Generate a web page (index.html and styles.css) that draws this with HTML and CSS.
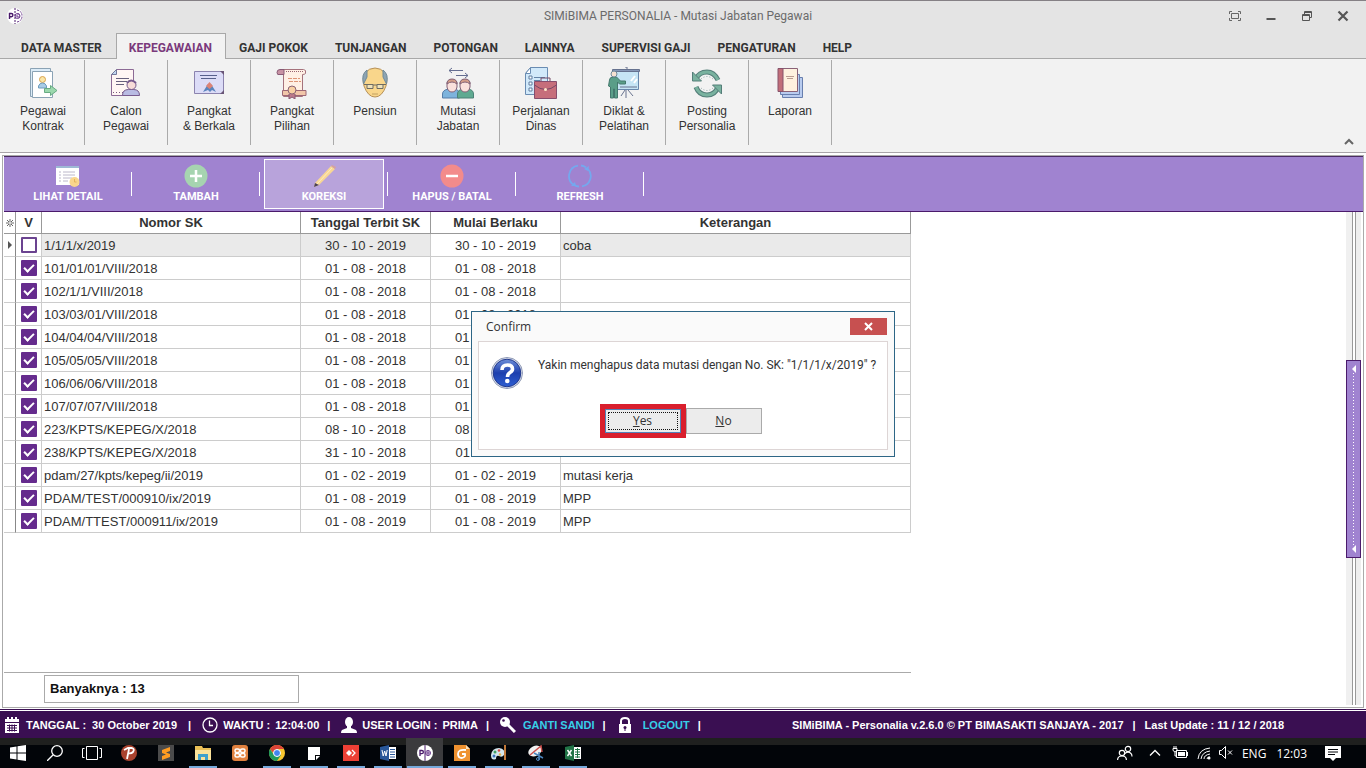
FILE: index.html
```html
<!DOCTYPE html>
<html lang="id">
<head>
<meta charset="utf-8">
<title>SIMiBIMA PERSONALIA - Mutasi Jabatan Pegawai</title>
<link rel="stylesheet" href="styles.css">
</head>
<body>
<header class="titlebar">
  <svg class="app-logo" width="16" height="16" viewBox="0 0 16 16"><circle cx="8" cy="8" r="8" fill="#fff"/><path d="M8 0v16" stroke="#4a1a6b" stroke-dasharray="2 1"/><path d="M2.500 11V5.500h1.800a1.500 1.500 0 0 1 0 3.200H2.500" fill="none" stroke="#4a1a6b" stroke-width="1.400"/><circle cx="10.500" cy="8" r="2.500" fill="none" stroke="#6b3a8c"/><path d="M9 8h4M11 5v6M10 2q5 1 5 6t-5 6" fill="none" stroke="#6b3a8c" stroke-dasharray="2 1"/></svg>
  <h1 class="title">SIMiBIMA PERSONALIA - Mutasi Jabatan Pegawai</h1>
  <div class="window-buttons">
    <button type="button" aria-label="Layar penuh"><svg width="12" height="10" viewBox="0 0 12 10"><path d="M.5 3V.5H3M9 .5h2.500V3M11.500 7v2.500H9M3 9.500H.5V7M2.500 2.500h7v5h-7z" fill="none" stroke="#666"/></svg></button>
    <button type="button" aria-label="Kecilkan"><svg width="12" height="12" viewBox="0 0 12 12"><path d="M1.500 9h9" stroke="#555" stroke-width="2"/></svg></button>
    <button type="button" aria-label="Pulihkan"><svg width="12" height="12" viewBox="0 0 12 12"><path d="M3.500 4V1.500h7v6H8.500M1.500 4.500h7v6h-7zM1.500 5.500h7M3.500 2.500h7" fill="none" stroke="#555"/></svg></button>
    <button type="button" aria-label="Tutup"><svg width="12" height="12" viewBox="0 0 12 12"><path d="M1.500 1.500l9 9M10.500 1.500l-9 9" stroke="#555" stroke-width="2.200"/></svg></button>
  </div>
</header>
<nav class="tabs">
  <button type="button">DATA MASTER</button><button type="button" class="current">KEPEGAWAIAN</button><button type="button">GAJI POKOK</button><button type="button">TUNJANGAN</button><button type="button">POTONGAN</button><button type="button">LAINNYA</button><button type="button">SUPERVISI GAJI</button><button type="button">PENGATURAN</button><button type="button">HELP</button>
</nav>
<section class="ribbon">
  <button type="button" class="ribbon-item"><svg viewBox="0 0 32 32"><g fill="#fff" stroke="#8ba3b5"><path fill="#dcecf8" d="M3.500 1.500h20v28h-20z"/><path d="M5.500 4.500h20v26h-20z"/></g><circle cx="15.500" cy="12.500" r="3" fill="#fbe6a8" stroke="#d8a24e"/><path d="M11.500 21v-2q1-3 4-3t4 3v2z" fill="#a9cce6" stroke="#6d9cbd"/><path d="M17.500 21.500h6v-3l6.500 5-6.500 5v-3h-6z" fill="#9bd8ad" stroke="#68ab83"/></svg><span>Pegawai<br>Kontrak</span></button>
  <button type="button" class="ribbon-item"><svg viewBox="0 0 32 32"><path d="M6.500 2.500h17v26h-22v-21z" fill="#fff6f4" stroke="#8c6a95"/><path d="M6.500 2.500v5h-5z" fill="#bfd5ee" stroke="#75799b"/><path d="M6 11.500h13M6 14.500h11M6 17.500h8" stroke="#67607d"/><path d="M3 25.500h10" stroke="#77577f" stroke-dasharray="1 2"/><path d="M12.500 28.500q0-6 6-6h5q6 0 6 6z" fill="#b9bbe3" stroke="#775b8e"/><circle cx="21.500" cy="18" r="4.500" fill="#f7dcd8" stroke="#775b8e"/><path d="M17 16q4-5 9 0" fill="none" stroke="#775b8e" stroke-width="2"/></svg><span>Calon<br>Pegawai</span></button>
  <button type="button" class="ribbon-item"><svg viewBox="0 0 32 32"><path d="M1.500 4.500h29v22h-29z" fill="#dcdcf7" stroke="#8b83ae"/><path d="M27 4h4v4zM27 27h4v-4z" fill="#695577"/><path d="M7 8.500h17M8 11.500h15" stroke="#57608b"/><path d="M10 25l5-8h3l5 8-4-2-2 2-2-2z" fill="#5a84bd"/><path d="M13 19l3.500-4 3.500 4-3.500 3z" fill="#dc8276"/></svg><span>Pangkat<br>&amp; Berkala</span></button>
  <button type="button" class="ribbon-item"><svg viewBox="0 0 32 32"><path d="M7.500 2.500h20q3 0 2 4-1 1-3 1v22h-19z" fill="#fff0e5" stroke="#a5727c"/><path d="M4 2.500q-3 0-3 3t3 2h4v-5z" fill="#c892a3" stroke="#885b76"/><path d="M10 4.500h17" stroke="#9a6472" stroke-dasharray="1 1"/><path d="M12 11.500h12M13 14.500h12" stroke="#dc9476" stroke-dasharray="4 1"/><path d="M6.500 23.500H30v5H6.500z" fill="#f1c6a9" stroke="#9c6775"/><path d="M13 27v5l3-2 3 2v-5" fill="#bd7a8a" stroke="#885b76"/><circle cx="16" cy="23" r="4" fill="#f9d0a4" stroke="#8a6375"/></svg><span>Pangkat<br>Pilihan</span></button>
  <button type="button" class="ribbon-item"><svg viewBox="0 0 32 32"><path d="M5 19q-2-8 1-13 4-5 10-5t10 5q3 5 1 13-4 11-11 11T5 19z" fill="#f9d68b" stroke="#b69058"/><path d="M8 3Q2 7 4.500 17L8 10zM24 3q6 4 3.500 14L24 10z" fill="#8da4b3" stroke="#718b99"/><path d="M8 17.500h6v4H8zM18 17.500h6v4h-6zM14 18h4M5 17.500h3M24 17.500h3" fill="#eee2ba" stroke="#6d6b62"/><path d="M13 27h6" stroke="#c1a062"/></svg><span>Pensiun</span></button>
  <button type="button" class="ribbon-item"><svg viewBox="0 0 32 32"><path d="M7 3.500h14M10 1L7 3.500 10 6M14 8.500h12M23 6l3 2.500-3 2.500" fill="none" stroke="#656e91"/><path d="M.5 31v-4q0-4 6-5h6q5 1 5 5v4z" fill="#7db3dc" stroke="#567da8"/><path d="M15.500 31v-4q0-4 5-5h6q5 1 5 5v4z" fill="#5faa91" stroke="#4c8177"/><path d="M5 16q0-3 5-3t5 3v4q-1 5-5 5t-5-5zM18 16q0-3 5-3t5 3v4q-1 5-5 5t-5-5z" fill="#fae1dc" stroke="#826277"/><path d="M5 17q0-5 5-5t5 5q-5-4-10 0zM18 17q0-5 5-5t5 5q-5-4-10 0z" fill="#d29c87" stroke="#826277"/></svg><span>Mutasi<br>Jabatan</span></button>
  <button type="button" class="ribbon-item"><svg viewBox="0 0 32 32"><path d="M5.500.5h17v27h-22v-21z" fill="#d1e9fa" stroke="#6a8cb2"/><path d="M5.500.5v6h-5z" fill="#fff" stroke="#6a8cb2"/><path d="M4 9h3v3H4zM4 15h3v3H4zM4 21h3v3H4z" fill="#fff" stroke="#5f7ca0"/><path d="M9 10.500h11M9 13.500h6" stroke="#6384a8"/><path d="M9.500 14.500h22v17h-22z" fill="#c66e7b" stroke="#874d6d"/><path d="M16 14v-3h9v3M9.500 18q11 9 22 0" fill="none" stroke="#754a67"/><circle cx="20.500" cy="22.500" r="1.500" fill="#ffe9ca"/></svg><span>Perjalanan<br>Dinas</span></button>
  <button type="button" class="ribbon-item"><svg viewBox="0 0 32 32"><path d="M5.500 4.500h25v18h-25z" fill="#c6e5f5" stroke="#6887ac"/><path d="M4.500 2.500h27v2h-27z" fill="#8798b7" stroke="#66728f"/><path d="M17 0h2v2M18 23v8M17 23l-4 6M20 23l5 6M12 20h17" fill="none" stroke="#68738f"/><path d="M23 14l4-5M26 16l3-4" stroke="#fff" stroke-width="2"/><path d="M1.500 13q0-3 4-3h3l4 4h5v3h-6l-2-2v16h-3v-9h-1v9h-3V20l-2-1z" fill="#5a9e88" stroke="#44786d"/><circle cx="6" cy="7" r="3" fill="#f7e1d1" stroke="#708a9a"/></svg><span>Diklat &amp;<br>Pelatihan</span></button>
  <button type="button" class="ribbon-item"><svg viewBox="0 0 32 32"><path d="M5 12Q8 5 16 5q7 0 11 8M27 20q-3 8-11 8-8 0-11-8" fill="none" stroke="#547e79" stroke-width="5"/><path d="M5 12Q8 5 16 5q7 0 11 8M27 20q-3 8-11 8-8 0-11-8" fill="none" stroke="#79b29f" stroke-width="3"/><path d="M1.500 5v9h9zM30.500 27v-9h-9z" fill="#79b29f" stroke="#547e79"/><path d="M10 12q6-5 12 0M10 21q6 5 12 0" fill="none" stroke="#8da6a8" stroke-dasharray="1 2"/></svg><span>Posting<br>Personalia</span></button>
  <button type="button" class="ribbon-item"><svg viewBox="0 0 32 32"><g fill="#b9ccef" stroke="#687fae"><path d="M8.500 10.500h20v20h-20z"/><path d="M6.500 7.500h19v20h-19z"/></g><path d="M4.500 1.500h19v23h-19z" fill="#fff1df" stroke="#8a6277"/><path d="M4 1.500h5v23H4z" fill="#c26e79" stroke="#87536b"/><path d="M12 9.500h8M13 11.500h6" stroke="#ba9b91"/></svg><span>Laporan</span></button>
  <button type="button" class="collapse" aria-label="Ciutkan pita"><svg width="10" height="7" viewBox="0 0 10 7"><path d="M1 6l4-4 4 4" fill="none" stroke="#666" stroke-width="2"/></svg></button>
</section>
<main class="workspace">
  <div class="toolbar">
    <div class="tool"><button type="button"><svg viewBox="0 0 24 24"><path d="M0 2h23v19H0z" fill="#fff"/><path d="M0 2h23v2H0z" fill="#9eb9d5"/><path d="M3 8h2M7 8h12M3 11h2M7 11h12M3 14h2M7 14h9M3 17h2M7 17h5" stroke="#bcb8ca"/><circle cx="18.500" cy="18" r="5" fill="#f9d68c"/><path d="M18.500 15v3h2" fill="none" stroke="#e3b45d"/></svg>LIHAT DETAIL</button></div>
    <div class="tool"><button type="button"><svg viewBox="0 0 24 24"><circle cx="12" cy="12" r="11.500" fill="#a6d4b0"/><path d="M12 6v12M6 12h12" stroke="#fff" stroke-width="2.500"/></svg>TAMBAH</button></div>
    <div class="tool"><button type="button" class="selected"><svg viewBox="0 0 24 24"><path d="M3 19L19 2l4 3L7 21l-5 2z" fill="#f8d794"/><path d="M3 19l4 2-5 2z" fill="#4b4057"/><path d="M19 2l1-1 4 2-1 2z" fill="#d6a29d"/><path d="M5 20L20 4" stroke="#ffecc0"/></svg>KOREKSI</button></div>
    <div class="tool"><button type="button"><svg viewBox="0 0 24 24"><circle cx="12" cy="12" r="11.500" fill="#f38b8b"/><path d="M6 12h12" stroke="#fff" stroke-width="2.500"/></svg>HAPUS / BATAL</button></div>
    <div class="tool"><button type="button"><svg viewBox="0 0 24 24"><path d="M6 21A10.500 10.500 0 0 1 10 1.700M13 1.500a10.500 10.500 0 0 1 5 2M20 5a10.500 10.500 0 0 1-6 17.400M11 22.500a10.500 10.500 0 0 1-5-1.500" fill="none" stroke="#74a8ee" stroke-width="1.800"/><path d="M3 22l4-4 1 4zM16 5l5-3-1 5z" fill="#74a8ee"/></svg>REFRESH</button></div>
  </div>
  <div class="content">
    <div class="grid-pane">
      <table class="grid">
        <colgroup><col class="c-mark"><col class="c-check"><col class="c-number"><col class="c-date"><col class="c-date"><col class="c-note"></colgroup>
        <thead><tr><th class="mark"><svg width="8" height="8" viewBox="0 0 8 8"><path d="M4 0v8M0 4h8M1 1l6 6M7 1L1 7" stroke="#666"/><circle cx="4" cy="4" r="1" fill="#fff"/></svg></th><th>V</th><th>Nomor SK</th><th>Tanggal Terbit SK</th><th>Mulai Berlaku</th><th>Keterangan</th></tr></thead>
        <tbody>
          <tr class="active"><td class="mark"><svg width="4" height="8" viewBox="0 0 4 8"><path d="M0 0l4 4-4 4z" fill="#555"/></svg></td><td><input type="checkbox" aria-label="1/1/1/x/2019"></td><td>1/1/1/x/2019</td><td>30 - 10 - 2019</td><td class="focused">30 - 10 - 2019</td><td>coba</td></tr>
          <tr><td></td><td><input type="checkbox" checked aria-label="101/01/01/VIII/2018"></td><td>101/01/01/VIII/2018</td><td>01 - 08 - 2018</td><td>01 - 08 - 2018</td><td></td></tr>
          <tr><td></td><td><input type="checkbox" checked aria-label="102/1/1/VIII/2018"></td><td>102/1/1/VIII/2018</td><td>01 - 08 - 2018</td><td>01 - 08 - 2018</td><td></td></tr>
          <tr><td></td><td><input type="checkbox" checked aria-label="103/03/01/VIII/2018"></td><td>103/03/01/VIII/2018</td><td>01 - 08 - 2018</td><td>01 - 08 - 2018</td><td></td></tr>
          <tr><td></td><td><input type="checkbox" checked aria-label="104/04/04/VIII/2018"></td><td>104/04/04/VIII/2018</td><td>01 - 08 - 2018</td><td>01 - 08 - 2018</td><td></td></tr>
          <tr><td></td><td><input type="checkbox" checked aria-label="105/05/05/VIII/2018"></td><td>105/05/05/VIII/2018</td><td>01 - 08 - 2018</td><td>01 - 08 - 2018</td><td></td></tr>
          <tr><td></td><td><input type="checkbox" checked aria-label="106/06/06/VIII/2018"></td><td>106/06/06/VIII/2018</td><td>01 - 08 - 2018</td><td>01 - 08 - 2018</td><td></td></tr>
          <tr><td></td><td><input type="checkbox" checked aria-label="107/07/07/VIII/2018"></td><td>107/07/07/VIII/2018</td><td>01 - 08 - 2018</td><td>01 - 08 - 2018</td><td></td></tr>
          <tr><td></td><td><input type="checkbox" checked aria-label="223/KPTS/KEPEG/X/2018"></td><td>223/KPTS/KEPEG/X/2018</td><td>08 - 10 - 2018</td><td>08 - 10 - 2018</td><td></td></tr>
          <tr><td></td><td><input type="checkbox" checked aria-label="238/KPTS/KEPEG/X/2018"></td><td>238/KPTS/KEPEG/X/2018</td><td>31 - 10 - 2018</td><td>01 - 11 - 2018</td><td></td></tr>
          <tr><td></td><td><input type="checkbox" checked aria-label="pdam/27/kpts/kepeg/ii/2019"></td><td>pdam/27/kpts/kepeg/ii/2019</td><td>01 - 02 - 2019</td><td>01 - 02 - 2019</td><td>mutasi kerja</td></tr>
          <tr><td></td><td><input type="checkbox" checked aria-label="PDAM/TEST/000910/ix/2019"></td><td>PDAM/TEST/000910/ix/2019</td><td>01 - 08 - 2019</td><td>01 - 08 - 2019</td><td>MPP</td></tr>
          <tr><td></td><td><input type="checkbox" checked aria-label="PDAM/TTEST/000911/ix/2019"></td><td>PDAM/TTEST/000911/ix/2019</td><td>01 - 08 - 2019</td><td>01 - 08 - 2019</td><td>MPP</td></tr>
        </tbody>
      </table>
      <div class="summary"><div class="count">Banyaknya : 13</div></div>
    </div>
    <div class="splitter"><button type="button" class="handle" aria-label="Buka panel"><svg width="4" height="8" viewBox="0 0 4 8"><path d="M4 0v8L0 4z" fill="#fff"/></svg><span class="dots"></span><svg width="4" height="8" viewBox="0 0 4 8"><path d="M4 0v8L0 4z" fill="#fff"/></svg></button></div>
  </div>
</main>
<footer class="status">
  <div class="field date"><svg viewBox="0 0 16 16"><path d="M1 2h14v3H1zM1 6h14v10H1z" fill="#fff"/><path d="M4 0v4M8 0v4M12 0v4" stroke="#fff" stroke-width="2"/><path d="M3 8.500h10M3 11h10M3 13.500h10M5.500 7.500v7M8 7.500v7M10.500 7.500v7" stroke="#3a0f52"/></svg><span>TANGGAL :</span><span class="value">30 October 2019</span></div>
  <div class="field time"><svg viewBox="0 0 16 16"><circle cx="8" cy="8" r="7" fill="none" stroke="#fff" stroke-width="1.300"/><path d="M7.500 3.500v5H11" fill="none" stroke="#fff" stroke-width="1.300"/></svg><span>WAKTU :</span><span class="value">12:04:00</span></div>
  <div class="field user"><svg viewBox="0 0 16 16"><ellipse cx="8" cy="5" rx="4" ry="5" fill="#fff"/><path d="M6 8h4v3l5 2q1 1 1 3H0q0-2 1-3l5-2z" fill="#fff"/></svg><span>USER LOGIN :</span><span class="value">PRIMA</span></div>
  <div class="field password"><svg viewBox="0 0 16 16"><circle cx="5" cy="5" r="5" fill="#fff"/><circle cx="3.500" cy="3.500" r="1.300" fill="#3a0f52"/><path d="M7 7l8 8M11 13l2-2M8 10l2-2" stroke="#fff" stroke-width="3"/></svg><a href="#ganti-sandi">GANTI SANDI</a></div>
  <div class="field logout"><svg viewBox="0 0 16 16"><path d="M4 8V4q0-3 4-3t4 3v4" fill="none" stroke="#fff" stroke-width="2"/><path d="M2 7h12v9H2z" fill="#fff"/><circle cx="8" cy="10.500" r="1.500" fill="#3a0f52"/><path d="M8 11v3" stroke="#3a0f52"/></svg><a href="#logout">LOGOUT</a></div>
  <div class="about"><span>SIMiBIMA - Personalia v.2.6.0 © PT BIMASAKTI SANJAYA - 2017</span><span>|</span><span>Last Update : 11 / 12 / 2018</span></div>
</footer>
<div class="taskbar">
  <div class="apps">
    <button type="button" class="start" aria-label="Start"><svg viewBox="0 0 16 16"><path d="M0 2.500l6.500-1V7.500H0zM7.500 1.300L16 0v7.500H7.500zM0 8.500h6.500v6L0 13.500zM7.500 8.500H16V16l-8.500-1.300z" fill="#fff"/></svg></button>
    <button type="button" aria-label="Cari"><svg viewBox="0 0 16 16"><circle cx="10" cy="6" r="5.300" fill="none" stroke="#fff" stroke-width="1.300"/><path d="M6 10l-6 6" stroke="#fff" stroke-width="1.300"/></svg></button>
    <button type="button" class="wide" aria-label="Tampilan tugas"><svg viewBox="0 0 20 16"><path d="M4.500 1.500h11v13h-11zM2.500 3.500H.5v9h2M17.500 3.500h2v9h-2" fill="none" stroke="#fff"/></svg></button>
    <button type="button" aria-label="Pomodoro"><svg viewBox="0 0 16 16"><circle cx="8" cy="8" r="8" fill="#a9432f"/><path d="M3 5l4-2h4q3 1 1 4-2 2-5 1M8 4L6 14" fill="none" stroke="#fff" stroke-width="1.800"/></svg></button>
    <button type="button" aria-label="Sublime Text"><svg viewBox="0 0 16 16"><path d="M0 0h16v16H0z" fill="#4b4b4b"/><path d="M12 2v4L8 7.500l4 1.500v3l-8 3v-4l4-1.500L4 8V5z" fill="#ff9c22"/></svg></button>
    <button type="button" class="open" aria-label="File Explorer"><svg viewBox="0 0 16 16"><path d="M0 1h7l1 2h8v12H0z" fill="#e9bf57"/><path d="M0 5h16v10H0z" fill="#fbe39b"/><path d="M3 15V9h10v6h-3v-3H6v3z" fill="#3fa1cc"/></svg></button>
    <button type="button" aria-label="XAMPP"><svg viewBox="0 0 16 16"><rect width="16" height="16" rx="3" fill="#e0813f"/><rect x="3" y="4" width="4.500" height="3.500" rx="1.500" fill="none" stroke="#fff" stroke-width="1.500"/><rect x="8.500" y="4" width="4.500" height="3.500" rx="1.500" fill="none" stroke="#fff" stroke-width="1.500"/><rect x="3" y="8.500" width="4.500" height="3.500" rx="1.500" fill="none" stroke="#fff" stroke-width="1.500"/><rect x="8.500" y="8.500" width="4.500" height="3.500" rx="1.500" fill="none" stroke="#fff" stroke-width="1.500"/></svg></button>
    <button type="button" class="open" aria-label="Chrome"><svg viewBox="0 0 16 16"><circle cx="8" cy="8" r="8" fill="#f7c62f"/><path d="M1 4a8 8 0 0 1 14 0H8L5 9z" fill="#db4437"/><path d="M1 4a8 8 0 0 0 7 12l4-6H5z" fill="#21995b"/><circle cx="8" cy="8" r="3.500" fill="#4385ef" stroke="#fff"/></svg></button>
    <button type="button" class="open" aria-label="Catatan"><svg viewBox="0 0 16 16"><path d="M2 2h12v8H9v5H2z" fill="#fff"/><path d="M10 11h4l-4 4z" fill="#fff"/></svg></button>
    <button type="button" class="open" aria-label="AnyDesk"><svg viewBox="0 0 16 16"><path d="M0 0h16v16H0z" fill="#ed4035"/><path d="M3 8l3-3 3 3-3 3z" fill="#fff"/><path d="M9 5l3 3-3 3" fill="none" stroke="#fff" stroke-width="1.300"/></svg></button>
    <button type="button" class="open" aria-label="Word"><svg viewBox="0 0 16 16"><path d="M8 2h8v12H8z" fill="#fff"/><path d="M10 4.500h5M10 7h5M10 9.500h5M10 12h5" stroke="#295799"/><path d="M0 2l9-2v16l-9-2z" fill="#295799"/><path d="M2 5l1.200 6L4.700 6l1.300 5L7.200 5" fill="none" stroke="#fff"/></svg></button>
    <button type="button" class="open current" aria-label="SIMiBIMA Personalia"><svg viewBox="0 0 16 16"><circle cx="8" cy="8" r="8" fill="#fff"/><path d="M8 0v16" stroke="#4a1a6b"/><path d="M3 11V5.500h1.800a1.500 1.500 0 0 1 0 3.200H3" fill="none" stroke="#4a1a6b" stroke-width="1.300"/><circle cx="11" cy="8" r="2.500" fill="none" stroke="#6b3a8c"/><path d="M9 8h4M11 5v6" stroke="#6b3a8c"/></svg></button>
    <button type="button" class="open" aria-label="Foxit"><svg viewBox="0 0 16 16"><path d="M0 0h12l4 4v12H0z" fill="#ef9230"/><path d="M12 0v4h4z" fill="#ffe1b8"/><path d="M12 5q-8-1-8 4 0 4 4 4 4-1 3-4H8" fill="none" stroke="#fff" stroke-width="1.800"/></svg></button>
    <button type="button" class="open" aria-label="Paint"><svg viewBox="0 0 16 16"><path d="M0 10q1-7 8-7 7 1 5 7-2 3-5 1-3-1-3 3-5 2-5-4z" fill="#d3e6ed"/><circle cx="4" cy="7" r="1.500" fill="#40a262"/><circle cx="8" cy="5.500" r="1.300" fill="#d44b46"/><circle cx="3" cy="11" r="1.500" fill="#3872bc"/><circle cx="9" cy="9.500" r="1.200" fill="#e2b24c"/><path d="M14 0v15" stroke="#c17939" stroke-width="2"/></svg></button>
    <button type="button" class="open" aria-label="Snipping Tool"><svg viewBox="0 0 16 16"><ellipse cx="7" cy="6" rx="7" ry="5" fill="#f1f1f1" transform="rotate(-25 7 6)"/><path d="M2 10L13 1l1 6" fill="none" stroke="#cb504d" stroke-width="1.500"/><path d="M6 8l9 5M11 7v8" stroke="#4d85bd" stroke-width="1.500"/><circle cx="10" cy="14" r="1.500" fill="none" stroke="#4d85bd"/></svg></button>
    <button type="button" class="open" aria-label="Excel"><svg viewBox="0 0 16 16"><path d="M8 2h8v12H8z" fill="#fff"/><path d="M10 4.500h5M10 7h5M10 9.500h5M10 12h5M12.500 3v10" stroke="#217346"/><path d="M0 2l9-2v16l-9-2z" fill="#217346"/><path d="M2.500 5l4 6M6.500 5l-4 6" stroke="#fff" stroke-width="1.400"/></svg></button>
  </div>
  <div class="tray">
    <svg class="people" viewBox="0 0 16 16"><g fill="none" stroke="#fff" stroke-width="1.200"><circle cx="5" cy="8" r="2.700"/><circle cx="11" cy="4" r="2.700"/><path d="M.6 15q0-4 4.400-4t4.400 4M8 8.500q3-3 6 0 1 1 1 3"/></g></svg>
    <svg class="chevron" viewBox="0 0 16 16"><path d="M3 10.500l5-5 5 5" fill="none" stroke="#fff" stroke-width="1.300"/></svg>
    <svg class="battery" viewBox="0 0 16 16"><path d="M4.500 5.500h10v7h-10z" fill="none" stroke="#fff"/><path d="M6 7h7v4H6z" fill="#fff"/><path d="M15.500 7v4M1 3.500h4v2q-2 3-4 0zM2 1v2M4 1v2M3 7v4h2" fill="none" stroke="#fff"/></svg>
    <svg class="wifi" viewBox="0 0 16 16"><g fill="none" stroke="#fff"><path d="M2 14Q3 4 14 3M5 14q1-7 9-8M8 14q0-4 6-5M11 14q0-2 3-2"/></g><circle cx="13" cy="13" r="1.500" fill="#fff"/></svg>
    <svg class="sound" viewBox="0 0 16 16"><path d="M1.500 5.500h2l4-4v12l-4-4h-2zM10 5.500l4 4M14 5.500l-4 4" fill="none" stroke="#fff"/></svg>
    <span class="lang">ENG</span><span class="clock">12:03</span>
    <svg class="notice" viewBox="0 0 16 16"><path d="M0 1h16v12h-5l-3 3-3-3H0z" fill="#fff"/><path d="M3 4.500h10M3 7h10M3 9.500h7" stroke="#020509"/></svg>
  </div>
</div>
<div class="overlay">
  <section class="confirm" role="dialog" aria-labelledby="confirm-title">
    <header><h2 id="confirm-title">Confirm</h2><button type="button" class="close" aria-label="Close"><svg width="9" height="9" viewBox="0 0 9 9"><path d="M1 1l7 7M8 1L1 8" stroke="#fff" stroke-width="2"/></svg></button></header>
    <div class="confirm-body">
      <div class="message"><svg width="32" height="32" viewBox="0 0 32 32"><defs><linearGradient id="ball" x1="0" y1="0" x2="0" y2="1"><stop offset="0" stop-color="#6d8ed8"/><stop offset=".5" stop-color="#1d3fae"/><stop offset="1" stop-color="#2e5fd2"/></linearGradient></defs><circle cx="16" cy="16" r="15.500" fill="#dfe3ee" stroke="#8e99b5"/><circle cx="16" cy="16" r="13.800" fill="url(#ball)" stroke="#20388d"/><path d="M11 13q0-5 5.500-5 5 0 5 4 0 2-2.500 3.500-2.500 1.500-2.500 4.500" fill="none" stroke="#fff" stroke-width="3.600"/><circle cx="16.300" cy="24" r="2.300" fill="#fff"/></svg><p>Yakin menghapus data mutasi dengan No. SK: "1/1/1/x/2019" ?</p></div>
      <div class="actions"><button type="button" class="yes"><span><u>Y</u>es</span></button><button type="button"><span><u>N</u>o</span></button></div>
    </div>
  </section>
</div>
</body>
</html>
```
FILE: styles.css
```css
* { box-sizing: border-box; }
body {
  margin: 0;
  min-height: 100vh;
  display: flex;
  flex-direction: column;
  background: #fff;
  color: #333;
  font-family: "Liberation Sans", Arial, sans-serif;
  font-size: 13px;
}
button { margin: 0; padding: 0; border: 0; background: none; color: inherit; font: inherit; }
svg { display: block; flex: none; }
h1, h2, p { margin: 0; font-weight: 400; }

.titlebar {
  display: grid;
  grid-template-columns: 1fr auto 1fr;
  align-items: center;
  height: 33px;
  padding: 0 17px 2px 7px;
  border-top: 1px solid #858085;
  background: #e4e4e4;
}
.title { color: #6b6b6b; font: 12px Roboto, sans-serif; }
.window-buttons { display: flex; justify-content: flex-end; align-items: center; gap: 24px; }

.tabs { display: flex; height: 26px; padding-left: 8px; background: #e4e4e4; box-shadow: inset 0 -1px #a8a8a8; }
.tabs button { padding: 2px 13px 0 12px; border: solid transparent; border-width: 1px 1px 0; font: 700 12px Roboto, sans-serif; }
.tabs .current { border-color: #a8a8a8; background: #f2f2f2; color: #7a3a7c; }

.ribbon { display: flex; height: 94px; padding: 1px 12px 7px 2px; border-bottom: 1px solid #a8a4a8; background: #f2f2f2; }
.ribbon-item { display: flex; flex-direction: column; align-items: center; gap: 5px; width: 83px; padding-top: 7px; border-right: 1px solid #aaa; font-size: 12px; line-height: 15px; }
.ribbon-item svg { width: 32px; height: 32px; }
.collapse { margin-left: auto; align-self: flex-end; }

.workspace { flex: 1; display: flex; flex-direction: column; margin: 2px; padding-left: 1px; border: 1px solid #aaa; }
.toolbar { display: flex; height: 56px; border-top: 1px solid #4a2b63; border-bottom: 1px solid #4a1a6b; background: #a083d0; }
.tool { display: flex; align-items: center; width: 128px; padding-left: 4px; }
.tool::after { content: ""; width: 1px; height: 24px; margin-left: 3px; background: #fff; }
.tool button { display: flex; flex-direction: column; align-items: center; gap: 2px; width: 120px; height: 50px; flex: none; padding-top: 4px; border: 1px solid transparent; color: #fff; font: 700 11px Roboto, sans-serif; }
.tool button.selected { border-color: #fff; background: #b8a3db; }
.tool svg { width: 24px; height: 24px; }

.content { flex: 1; display: flex; }
.grid-pane { flex: 1; display: flex; flex-direction: column; justify-content: space-between; }
.grid { width: 907px; table-layout: fixed; border-collapse: separate; border-spacing: 0; }
.c-mark { width: 12px; }
.c-check { width: 26px; }
.c-number { width: 259px; }
.c-date { width: 130px; }
.c-note { width: 350px; }
.grid th, .grid td { height: 23px; padding: 0 2px; border-right: 1px solid #ccc; border-bottom: 1px solid #ccc; white-space: nowrap; }
.grid th { height: 22px; border-color: #999; }
.grid td:first-child { border-right-color: #888; }
.grid .mark { padding: 0 2px; }
.grid td.mark { padding-left: 4px; }
.grid td:nth-child(2) { padding-left: 5px; }
.grid td:nth-child(4), .grid td:nth-child(5) { text-align: center; }
.grid .active td:nth-child(n+3):not(.focused) { background: #eaeaea; }
.grid input { display: block; appearance: none; width: 16px; height: 16px; margin: 0; border: 2px solid #6b4390; border-radius: 1px; background: #fff; }
.grid input:checked { border-color: #652b8d; background: #652b8d; }
.grid input:checked::before { content: ""; display: block; width: 8px; height: 4px; margin: 2px 1px; border: solid #fff; border-width: 0 0 2px 2px; transform: rotate(-45deg); }
.summary { width: 907px; padding: 2px 0 4px 40px; border-top: 1px solid #aaa; }
.count { width: 255px; padding: 0 5px; border: 1px solid #aaa; color: #111; font-weight: 700; line-height: 26px; }
.splitter { display: flex; align-items: center; width: 15px; margin: 0 2px 2px 0; background: linear-gradient(90deg, #f0f0f0 6px, #999 6px 7px, #fff 7px 9px, #999 9px 10px, #eee 10px); }
.handle { display: flex; flex-direction: column; align-items: center; width: 15px; height: 198px; padding: 4px 0; border: 1px solid #4a1a6b; background: #a083d0; }
.dots { flex: 1; width: 1px; background: repeating-linear-gradient(#fff 0 1px, transparent 1px 3px); }

.status { display: flex; align-items: center; height: 28px; padding: 0 82px 0 4px; background: #3a0f52; border-top: 1px solid #fff; box-shadow: 0 -1px #3a0f52; color: #fff; font-size: 11px; font-weight: 700; white-space: nowrap; }
.field { display: flex; align-items: center; gap: 5px; }
.field::after { content: "|"; margin: 0 11px 0 3px; }
.field svg { width: 16px; height: 16px; }
.field a { color: #36cfe8; text-decoration: none; }
.date { gap: 6px; }
.date::after { margin-left: 5px; }
.logout a { margin-left: 5px; }
.password a { margin-left: 2px; }
.about { display: flex; gap: 9px; margin-left: auto; }

.taskbar { display: flex; justify-content: space-between; height: 30px; background: linear-gradient(#1f201f 7px, #020509 7px); color: #fff; font: 12px "Open Sans", sans-serif; }
.apps { display: flex; }
.apps button { display: flex; justify-content: center; width: 37px; padding-top: 7px; }
.apps .start { width: 36px; }
.apps svg { width: 16px; height: 16px; }
.apps .wide svg { width: 20px; }
.apps .open { background: linear-gradient(#76a9db, #76a9db) bottom / 28px 2px no-repeat; }
.apps .current { background: linear-gradient(#76a9db, #76a9db) bottom / 36px 2px no-repeat, #3b3b3d; }
.tray { display: flex; align-items: center; gap: 8px; padding-right: 25px; }
.tray svg { width: 16px; height: 16px; }
.people { margin-right: 6px; }
.chevron { margin-right: 1px; }
.wifi { margin-right: -2px; }
.clock { margin: 0 10px 0 2px; }

.overlay { position: fixed; inset: 0; display: grid; place-items: center; }
.confirm { width: 424px; padding: 0 6px 6px; border: 1px solid #2d6686; background: #fafafa; font: 12px "Open Sans", sans-serif; }
.confirm header { display: flex; justify-content: space-between; align-items: center; height: 29px; padding: 0 1px 0 8px; }
.confirm h2 { font-size: 12px; }
.close { display: grid; place-items: center; width: 37px; height: 17px; background: #c75050; }
.confirm-body { padding: 15px 12px; border: 1px solid #ddd5d5; background: #fff; }
.message { display: flex; gap: 15px; white-space: nowrap; }
.message p { font-family: Roboto, sans-serif; line-height: 16px; }
.actions { display: flex; justify-content: center; align-items: center; gap: 5px; margin-top: 19px; }
.actions button { width: 76px; height: 26px; padding: 3px; border: 1px solid #aaa; background: #ececec; }
.actions span { display: block; line-height: 18px; }
.actions .yes { height: 24px; padding: 2px; border-color: #5480b8; outline: 5px solid #d91f2d; }
.actions .yes span { border: 1px dotted #111; line-height: 16px; }
```
